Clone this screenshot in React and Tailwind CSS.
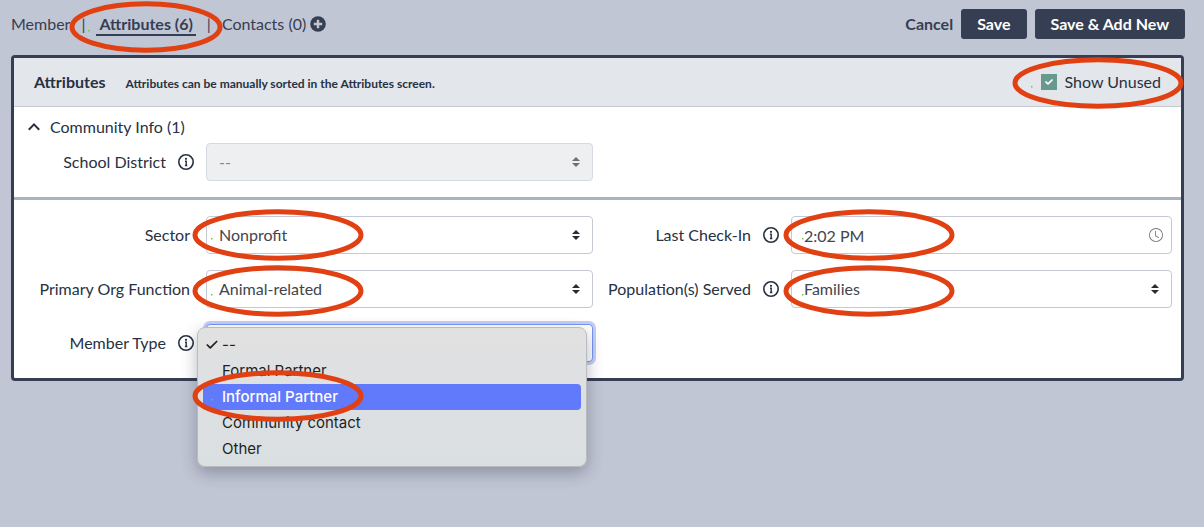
import React, { useState } from 'react';
import clsx from 'clsx';
import { FaCheck } from 'react-icons/fa6';
import { BsClock } from 'react-icons/bs';
import { Check } from 'lucide-react';

const MEMBER_TYPES = ['--', 'Formal Partner', 'Informal Partner', 'Community contact', 'Other'];

// Hand-placed highlight around a control, with its small green anchor dot
function Highlight({ width = 172, className }) {
  return (
    <svg
      aria-hidden="true"
      width={width}
      height="52"
      viewBox={`0 0 ${width} 52`}
      className={clsx('pointer-events-none absolute z-20 max-w-none', className)}
    >
      <ellipse cx={width / 2} cy="26" rx={width / 2 - 3} ry="23.2" fill="none" stroke="#e04012" strokeWidth="5" />
      <rect x="19" y="29" width="1.5" height="1.5" fill="#7cc142" />
    </svg>
  );
}

function InfoIcon() {
  return (
    <svg aria-hidden="true" viewBox="0 0 16 16" className="size-4 shrink-0 text-[#273142]">
      <circle cx="8" cy="8" r="7.2" fill="none" stroke="currentColor" strokeWidth="1.6" />
      <circle cx="8" cy="4.8" r="1.1" fill="currentColor" />
      <path d="M7 7.2h1.2v4.6M6.9 11.5h2.4" fill="none" stroke="currentColor" strokeWidth="1.4" />
    </svg>
  );
}

function SortArrows({ className }) {
  return (
    <svg
      aria-hidden="true"
      viewBox="0 0 8 10"
      className={clsx('pointer-events-none absolute right-[13px] top-1/2 h-[10px] w-2 -translate-y-1/2', className)}
    >
      <path d="M4 0 8 4H0zM4 10 0 6h8z" fill="currentColor" />
    </svg>
  );
}

function Field({ id, label, info, wide, children }) {
  return (
    <div className="flex items-center gap-3">
      <div className={clsx('flex shrink-0 items-center justify-end gap-3', wide ? 'w-[186px]' : 'w-[180px]', !info && 'pr-1')}>
        <label htmlFor={id} className="whitespace-nowrap">{label}</label>
        {info && <InfoIcon />}
      </div>
      <div className="relative min-w-0 flex-1">{children}</div>
    </div>
  );
}

function SelectBox({ id, value, disabled, active }) {
  return (
    <>
      <select
        id={id}
        disabled={disabled}
        defaultValue={value}
        className={clsx(
          'block h-[38px] w-full appearance-none rounded border px-3 text-base outline-none',
          disabled ? 'border-[#d5d9e2] bg-[#eeeff1] text-[#85888e] opacity-100' : 'bg-white text-[#41454d]',
          !disabled && (active ? 'border-[#7696f4] ring-3 ring-[#c6cdf5]' : 'border-[#c5c9d5]')
        )}
      >
        <option>{value}</option>
      </select>
      <SortArrows className={disabled ? 'text-[#6c6f74]' : 'text-[#272b33]'} />
    </>
  );
}

function TypeMenu() {
  const [hovered, setHovered] = useState(2);

  return (
    <ul
      role="listbox"
      aria-label="Member Type"
      className="absolute -left-[9px] right-[6px] top-[3px] z-10 rounded-lg border border-[#b9bbc0] bg-linear-to-b from-[#e1e1e1] to-[#dadfe2] px-[5px] py-1 font-[Inter,sans-serif] text-[15px] text-[#1d1f22] shadow-[0_6px_16px_rgba(30,38,60,0.32)]"
    >
      {MEMBER_TYPES.map((type, i) => (
        <li
          key={type}
          role="option"
          aria-selected={i === 0}
          onMouseEnter={() => setHovered(i)}
          className={clsx('relative flex h-[26px] items-center rounded pl-[19px]', hovered === i && 'bg-[#6179fb] font-medium text-white')}
        >
          {i === 0 && <Check aria-hidden="true" className="absolute left-[2px] size-[14px]" strokeWidth={3} />}
          {type}
          {i === 2 && <Highlight className="-left-[11px] -top-[14px]" />}
        </li>
      ))}
    </ul>
  );
}

export default function App() {
  const [showUnused, setShowUnused] = useState(true);

  return (
    <div className="min-h-screen bg-[#c1c6d4] pb-4 pl-[11px] pr-5 pt-[9px] font-[Lato,sans-serif] text-base text-[#273142]">
      <header className="-mr-px flex items-center justify-between text-[#363e53]">
        <nav className="flex items-center">
          <a href="#member">Member</a>
          <span className="w-[26px] text-center">|</span>
          <span className="relative">
            <a href="#attributes" className="block border-b-2 border-[#363e53] px-[3px] pt-[2px] font-bold leading-5">Attributes (6)</a>
            <Highlight width={154} className="-left-[27px] -top-[11px]" />
          </span>
          <span className="w-[26px] text-center">|</span>
          <a href="#contacts">Contacts (0)</a>
          <button type="button" aria-label="Add contact" className="ml-1">
            <svg aria-hidden="true" viewBox="0 0 16 16" className="size-4">
              <circle cx="8" cy="8" r="7.8" fill="currentColor" />
              <path d="M8 3.8v8.4M3.8 8h8.4" stroke="#c1c6d4" strokeWidth="2.4" />
            </svg>
          </button>
        </nav>
        <div className="flex items-center gap-2 font-bold">
          <button type="button">Cancel</button>
          <button type="button" className="h-[30px] rounded-[3px] bg-[#363e53] px-4 text-white">Save</button>
          <button type="button" className="h-[30px] rounded-[3px] bg-[#363e53] px-4 text-white">Save &amp; Add New</button>
        </div>
      </header>

      <main className="mt-4 rounded border-3 border-[#363e53] bg-white">
        <div className="flex h-[49px] items-center justify-between border-b border-[#c5c9d0] bg-[#e3e6eb] px-5">
          <div className="flex items-baseline gap-5">
            <h1 className="font-bold">Attributes</h1>
            <p className="text-xs font-bold">Attributes can be manually sorted in the Attributes screen.</p>
          </div>
          <label className="relative flex items-center gap-2">
            <span className="relative flex size-4">
              <input
                type="checkbox"
                checked={showUnused}
                onChange={(e) => setShowUnused(e.target.checked)}
                className="size-4 appearance-none bg-[#67998f]"
              />
              {showUnused && <FaCheck className="pointer-events-none absolute left-1 top-1 size-2 stroke-white text-white" strokeWidth={60} />}
            </span>
            Show Unused
            <Highlight className="-left-[29px] -top-[13px]" />
          </label>
        </div>

        <section className="border-b-3 border-[#aab1c2] pb-4 pr-[9px] pt-2">
          <button type="button" className="ml-3 flex items-center gap-2 text-left">
            <svg aria-hidden="true" viewBox="0 0 16 16" className="size-4">
              <path d="M2.8 10.8 8 5.4l5.2 5.4" fill="none" stroke="currentColor" strokeWidth="2" />
            </svg>
            Community Info (1)
          </button>
          <div className="mt-1 grid grid-cols-2">
            <Field id="district" label="School District" info>
              <SelectBox id="district" value="--" disabled />
            </Field>
          </div>
        </section>

        <section className="grid grid-cols-2 gap-y-4 pb-4 pr-[9px] pt-4">
          <Field id="sector" label="Sector">
            <SelectBox id="sector" value="Nonprofit" />
            <Highlight className="-left-[14px] -top-[7px]" />
          </Field>
          <Field id="checkin" label="Last Check-In" info wide>
            <input
              id="checkin"
              type="text"
              defaultValue="2:02 PM"
              className="block h-[38px] w-full rounded border border-[#c5c9d5] px-3 text-[#41454d] outline-none"
            />
            <BsClock aria-hidden="true" className="absolute right-[9px] top-3 size-[14px] text-[#777a80]" />
            <Highlight className="-left-[8px] -top-[7px]" />
          </Field>
          <Field id="org" label="Primary Org Function">
            <SelectBox id="org" value="Animal-related" />
            <Highlight className="-left-[14px] -top-[5px]" />
          </Field>
          <Field id="served" label="Population(s) Served" info wide>
            <SelectBox id="served" value="Families" />
            <Highlight className="-left-[8px] -top-[5px]" />
          </Field>
          <Field id="type" label="Member Type" info>
            <SelectBox id="type" value="--" active />
            <TypeMenu />
          </Field>
        </section>
      </main>
    </div>
  );
}
